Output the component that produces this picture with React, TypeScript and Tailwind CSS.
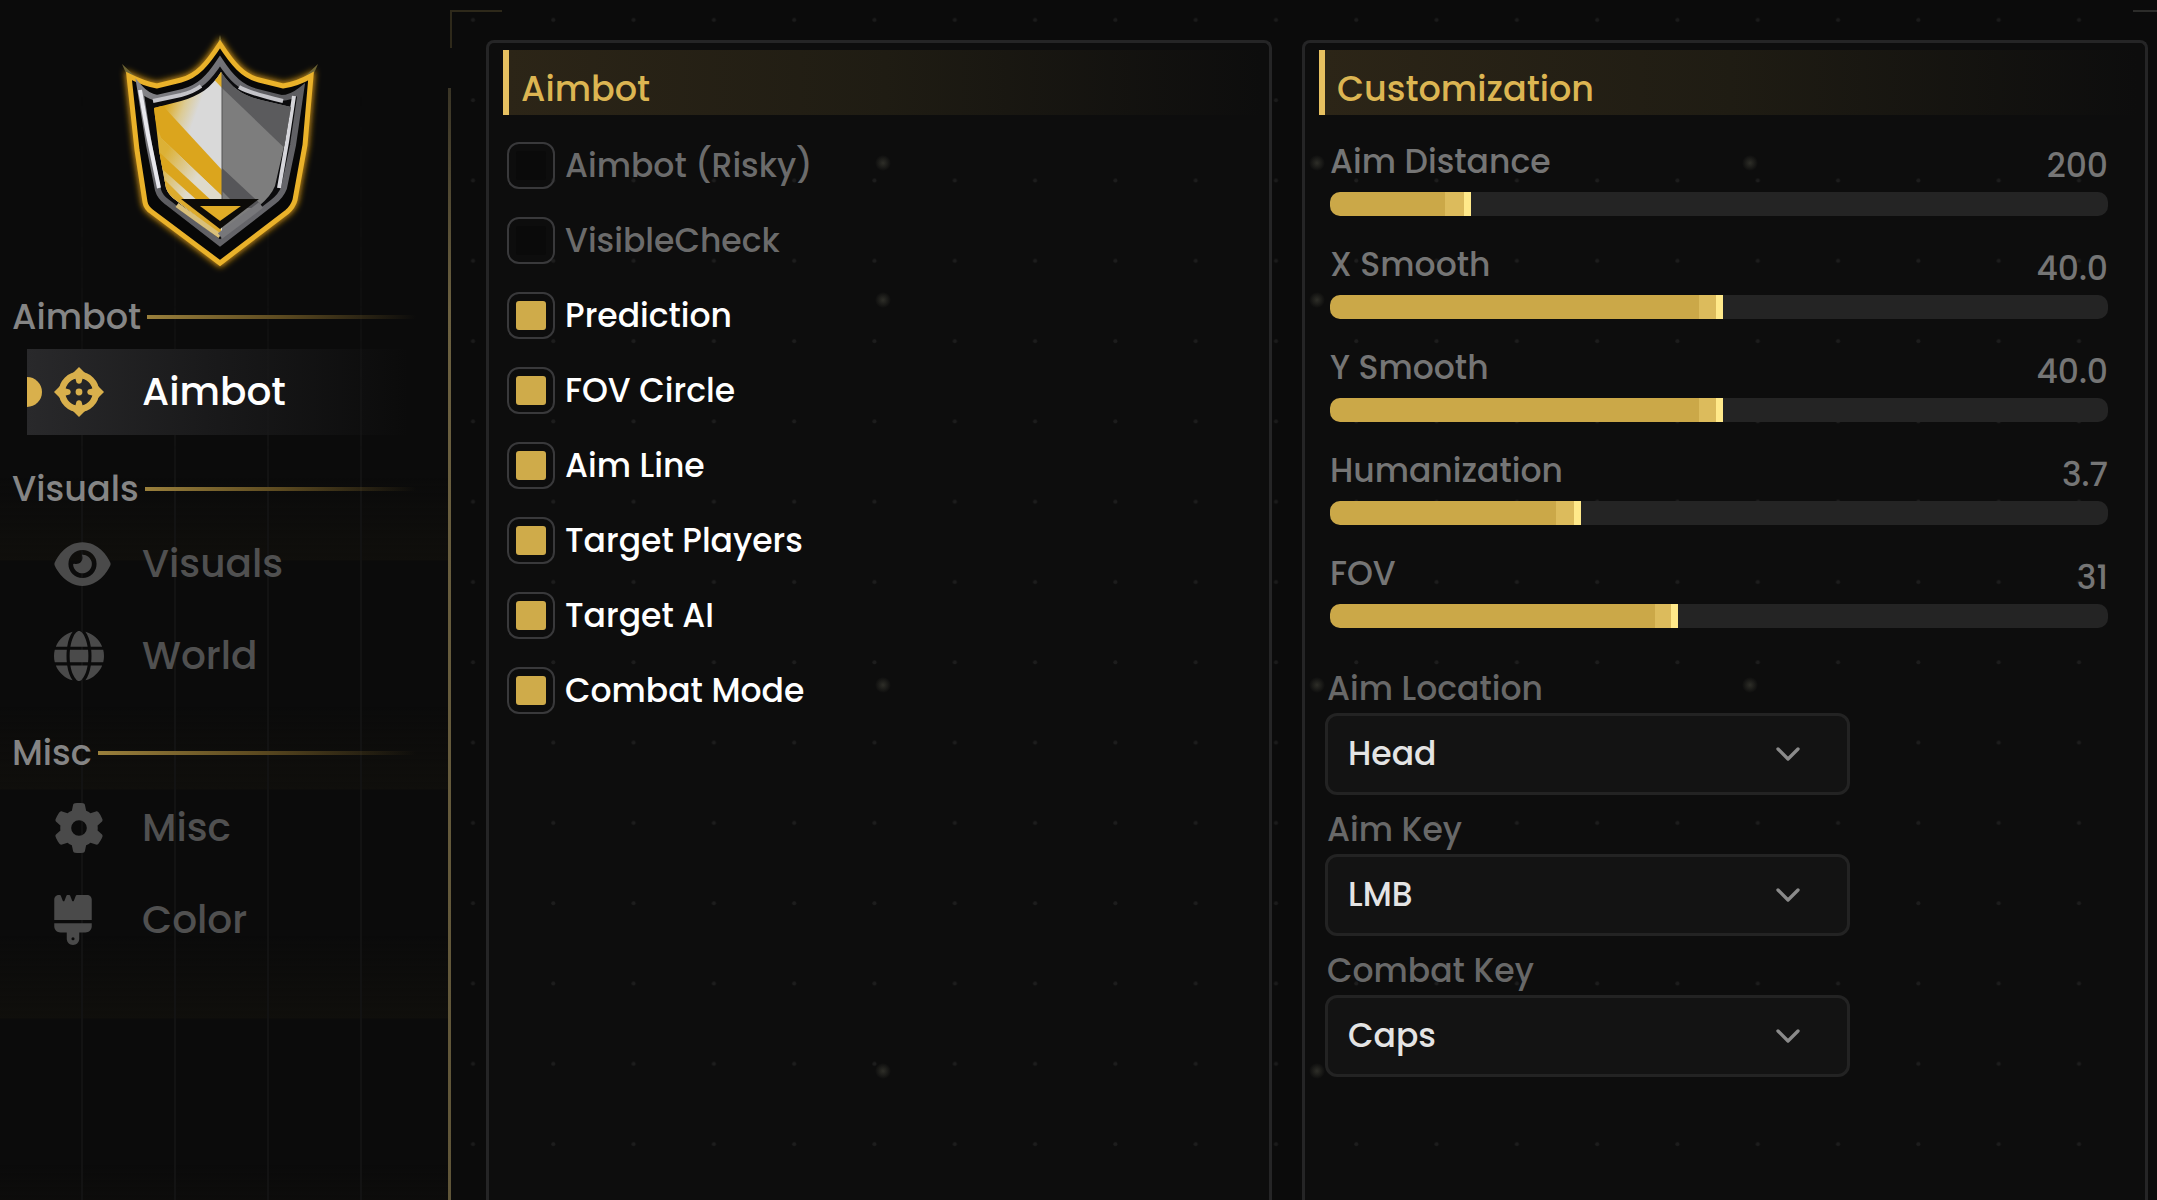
import React, { useState } from 'react';
import { ChevronDown } from 'lucide-react';
import { FaBrush, FaEye, FaGear, FaGlobe } from 'react-icons/fa6';

interface NavItem {
    label: string;
    icon: React.ReactNode;
}

interface NavSection {
    title: string;
    items: NavItem[];
}

interface SliderConfig {
    label: string;
    value: number;
    min: number;
    max: number;
    step: number;
    digits: number;
}

const CrosshairIcon: React.FC = () => (
    <svg viewBox="0 0 50 50" className="h-[50px] w-[50px]" fill="currentColor" aria-hidden="true">
        <circle cx="25" cy="25" r="17" fill="none" stroke="currentColor" strokeWidth="6.5" />
        <path d="M25 0 L33 8 H17Z M25 50 L17 42 H33Z M0 25 L8 17 V33Z M50 25 L42 33 V17Z" />
        <path d="M21 10 H29 L27.5 15.5 Q25 18 22.5 15.5Z M21 40 H29 L27.5 34.5 Q25 32 22.5 34.5Z M10 21 V29 L15.5 27.5 Q18 25 15.5 22.5Z M40 21 V29 L34.5 27.5 Q32 25 34.5 22.5Z" />
        <circle cx="25" cy="25" r="3.4" />
    </svg>
);

const NAV_SECTIONS: NavSection[] = [
    { title: 'Aimbot', items: [{ label: 'Aimbot', icon: <CrosshairIcon /> }] },
    {
        title: 'Visuals',
        items: [
            { label: 'Visuals', icon: <FaEye className="h-[50px] w-[57px]" /> },
            { label: 'World', icon: <FaGlobe className="h-[50px] w-[50px]" /> },
        ],
    },
    {
        title: 'Misc',
        items: [
            { label: 'Misc', icon: <FaGear className="h-[50px] w-[50px]" /> },
            { label: 'Color', icon: <FaBrush className="h-[50px] w-[38px]" /> },
        ],
    },
];

const TOGGLES = [
    { label: 'Aimbot (Risky)', on: false },
    { label: 'VisibleCheck', on: false },
    { label: 'Prediction', on: true },
    { label: 'FOV Circle', on: true },
    { label: 'Aim Line', on: true },
    { label: 'Target Players', on: true },
    { label: 'Target AI', on: true },
    { label: 'Combat Mode', on: true },
];

const SLIDERS: SliderConfig[] = [
    { label: 'Aim Distance', value: 200, min: 0, max: 1150, step: 1, digits: 0 },
    { label: 'X Smooth', value: 40, min: 0, max: 80, step: 0.1, digits: 1 },
    { label: 'Y Smooth', value: 40, min: 0, max: 80, step: 0.1, digits: 1 },
    { label: 'Humanization', value: 3.7, min: 0, max: 11.7, step: 0.1, digits: 1 },
    { label: 'FOV', value: 31, min: 0, max: 70, step: 1, digits: 0 },
];

const SELECTS = [
    { label: 'Aim Location', options: ['Head', 'Neck', 'Chest'] },
    { label: 'Aim Key', options: ['LMB', 'RMB', 'Shift'] },
    { label: 'Combat Key', options: ['Caps', 'Alt', 'Ctrl'] },
];

const SPARKS = [
    [883, 163], [883, 300], [883, 685], [883, 1071],
    [1317, 163], [1317, 300], [1317, 685], [1317, 1071],
    [1750, 163], [1750, 685],
];

const SHIELD_OUTLINE =
    'M105 14 C92 34 82 46 66 50 L42 56 Q30 54 14 46 L22 120 L30 172 Q31 178 37 182 L105 233 L172 182 Q178 177 180 170 L190 115 L196 46 Q182 54 168 56 L144 50 C128 46 118 34 105 14Z';

const ShieldLogo: React.FC = () => (
    <svg viewBox="0 0 210 250" className="h-[250px] w-[210px]" aria-hidden="true">
        <defs>
            <filter id="glow" x="-20%" y="-20%" width="140%" height="140%">
                <feGaussianBlur stdDeviation="3" />
            </filter>
            <linearGradient id="rim" x1="0" y1="0" x2="1" y2="1">
                <stop offset="0" stopColor="#8d8d92" />
                <stop offset="0.5" stopColor="#5a5a5e" />
                <stop offset="1" stopColor="#6d6d72" />
            </linearGradient>
            <linearGradient id="leftFace" gradientUnits="userSpaceOnUse" x1="46" y1="86" x2="84" y2="100">
                <stop offset="0" stopColor="#dca81c" />
                <stop offset="0.45" stopColor="#dccb94" />
                <stop offset="0.8" stopColor="#d9d9d9" />
            </linearGradient>
            <linearGradient id="streak" gradientUnits="userSpaceOnUse" x1="46" y1="130" x2="80" y2="150">
                <stop offset="0" stopColor="#dcb136" />
                <stop offset="1" stopColor="#dedacb" />
            </linearGradient>
            <clipPath id="face">
                <path d="M106 42 C96 58 84 66 66 71 L39 78 L44 120 L51 158 Q54 166 62 171 L106 206 L144 176 Q156 166 160 156 L170 112 L176 77 L146 70 C130 66 118 60 106 42Z" />
            </clipPath>
        </defs>
        <path d={SHIELD_OUTLINE} fill="none" stroke="#d99a12" strokeWidth="7" filter="url(#glow)" />
        <path d="M105 5 L102 16 H108Z M7 34 L14 50 L22 48Z M203 34 L196 50 L188 48Z" fill="#6d6434" />
        <path d={SHIELD_OUTLINE} fill="#070707" stroke="#eab22a" strokeWidth="5" />
        <path
            d="M105 31 C94 48 84 58 68 62 L42 68 Q32 66 25 58 L34 115 L43 160 Q45 167 52 172 L105 213 L158 172 Q166 166 169 158 L178 115 L186 60 Q176 68 166 68 L142 62 C126 58 116 48 105 31Z"
            fill="#0b0b0d"
            stroke="url(#rim)"
            strokeWidth="6"
        />
        <path d="M25 60 L33 105 L44 158" fill="none" stroke="#e8e8ee" strokeWidth="4" />
        <path d="M179 66 L172 112 L164 158" fill="none" stroke="#d5d5da" strokeWidth="4" />
        <path d="M38 71 L66 65 Q78 62 86 56 M124 57 Q134 63 168 71" fill="none" stroke="#c4c4c9" strokeWidth="4" />
        <g clipPath="url(#face)">
            <rect x="30" y="38" width="77" height="172" fill="url(#leftFace)" />
            <path d="M92 42 H107 V58Z" fill="#dfae2a" />
            <path d="M36 76 H48 L107 140 V166 L46 108Z" fill="#dba51d" />
            <path d="M44 106 L107 166 V210 H40Z" fill="url(#streak)" />
            <path d="M44 122 L98 172 H84 L46 138Z" fill="#dba51d" />
            <path d="M48 148 L72 172 L106 198 V208 L48 170Z" fill="#dcab2e" />
            <rect x="107" y="38" width="72" height="172" fill="#7d7d7d" />
            <path d="M107 40 L180 60 V128 L107 58Z" fill="#5b5b5d" />
            <path d="M107 138 L150 178 H124 L107 161Z" fill="#565659" />
            <path d="M107 42 V174" stroke="#555" strokeWidth="1" />
        </g>
        <path d="M66 169 H144 L105 199Z" fill="#0c0b08" />
        <path d="M85 176 H126 L105 191Z" fill="#e0ac26" />
        <path d="M62 175 L105 206" stroke="#d9c07a" strokeWidth="5" />
        <path d="M146 175 L105 206" stroke="#77777a" strokeWidth="7" />
    </svg>
);

const Sidebar: React.FC = () => {
    const [active, setActive] = useState('Aimbot');

    return (
        <aside className="relative w-[448px] shrink-0">
            <div className="absolute inset-0 bg-[repeating-linear-gradient(to_bottom,transparent_0px,transparent_20px,#100f0c_102px,transparent_103px,transparent_229px)] [mask-image:linear-gradient(to_bottom,transparent_30%,black_40%)]" />
            <div className="absolute inset-0 bg-[repeating-linear-gradient(to_right,transparent_0px,transparent_81px,#131313_81px,#131313_83px,transparent_83px,transparent_93px)] [mask-image:linear-gradient(to_bottom,transparent_8%,black_40%)]" />
            <div className="relative flex flex-col pt-[30px]">
                <div className="flex pl-[115px]">
                    <ShieldLogo />
                </div>
                <nav className="mt-[21px] flex flex-col gap-[38px]">
                    {NAV_SECTIONS.map((section) => (
                        <section key={section.title}>
                            <div className="flex items-center gap-1.5 pr-8 pl-3">
                                <h2 className="text-[35px] leading-8 font-medium text-[#858585]">{section.title}</h2>
                                <span className="h-1 flex-1 bg-linear-to-r from-[#9a803c] via-[#5c4a20] to-transparent" />
                            </div>
                            <div className="mt-4 flex flex-col gap-1.5">
                                {section.items.map(({ label, icon }) => {
                                    const isActive = active === label;
                                    return (
                                        <button
                                            key={label}
                                            type="button"
                                            onClick={() => setActive(label)}
                                            className={`relative ml-[27px] flex h-[86px] items-center pl-[27px] text-left text-[39px] font-medium ${
                                                isActive
                                                    ? 'mr-10 bg-linear-to-r from-[#29292b] via-[#19191a] to-transparent text-white'
                                                    : 'text-[#505050]'
                                            }`}
                                        >
                                            {isActive && <span className="absolute left-0 h-[30px] w-[15px] rounded-r-full bg-[#d9b04c]" />}
                                            <span className={`flex w-[88px] ${isActive ? 'text-[#d9b04c]' : 'text-[#4a4a4a]'}`}>
                                                {icon}
                                            </span>
                                            {label}
                                        </button>
                                    );
                                })}
                            </div>
                        </section>
                    ))}
                </nav>
            </div>
        </aside>
    );
};

const Panel: React.FC<{ title: string; children: React.ReactNode }> = ({ title, children }) => (
    <section className="rounded-t-lg border-3 border-b-0 border-[#252526] bg-white/1 pt-[7px] pr-2">
        <h2 className="ml-[14px] border-l-6 border-[#e6c060] bg-linear-to-r from-[#2c2517] via-[#1f1c13] to-[#0d0d0d] pt-3 pl-3 text-[35px] leading-[53px] font-medium text-[#dcb552]">
            {title}
        </h2>
        {children}
    </section>
);

const Toggle: React.FC<{ label: string; defaultOn: boolean }> = ({ label, defaultOn }) => (
    <label className="flex cursor-pointer items-center gap-[10px]">
        <input
            type="checkbox"
            defaultChecked={defaultOn}
            className="peer h-[47px] w-12 appearance-none rounded-xl border-2 border-[#39393b] bg-[#0a0a0a] bg-clip-content p-[7px] checked:bg-[#cfab4a]"
        />
        <span className="text-[33px] leading-[47px] font-medium text-[#6b6b6b] peer-checked:text-white">{label}</span>
    </label>
);

const Slider: React.FC<{ config: SliderConfig }> = ({ config }) => {
    const [value, setValue] = useState(config.value);
    const percent = ((value - config.min) / (config.max - config.min)) * 100;

    return (
        <label className="flex flex-col">
            <span className="flex justify-between text-[33px] leading-10 font-medium text-[#757575]">
                {config.label}
                <span className="pt-1">{value.toFixed(config.digits)}</span>
            </span>
            <input
                type="range"
                min={config.min}
                max={config.max}
                step={config.step}
                value={value}
                onChange={(e) => setValue(Number(e.target.value))}
                className="mt-1.5 h-6 w-full cursor-pointer appearance-none overflow-hidden rounded-[10px] [&::-webkit-slider-thumb]:h-6 [&::-webkit-slider-thumb]:w-[7px] [&::-webkit-slider-thumb]:appearance-none [&::-webkit-slider-thumb]:bg-[#ffe98a]"
                style={{
                    background: `linear-gradient(to right, #cba848 calc(${percent}% - 20px), #dcbb5c calc(${percent}% - 20px), #dcbb5c ${percent}%, #242424 ${percent}%)`,
                }}
            />
        </label>
    );
};

const SelectField: React.FC<{ label: string; options: string[] }> = ({ label, options }) => (
    <label className="flex flex-col text-[33px] leading-10 font-medium text-[#686868]">
        <span className="pl-0.5">{label}</span>
        <span className="relative mt-1 flex items-center">
            <select className="h-[82px] w-full appearance-none rounded-xl border-3 border-[#232323] bg-[#131313] px-5 text-[33px] text-[#e4e4e4]">
                {options.map((option) => (
                    <option key={option}>{option}</option>
                ))}
            </select>
            <ChevronDown className="pointer-events-none absolute right-[42px] size-10 text-[#8a8a8a]" strokeWidth={2} />
        </span>
    </label>
);

// Dotted grid with soft sparks behind the panels
const GridBackdrop: React.FC = () => (
    <svg className="pointer-events-none absolute inset-0 h-full w-full" aria-hidden="true">
        <defs>
            <pattern id="dots" width="80.3" height="80.3" patternUnits="userSpaceOnUse" x="433" y="-20">
                <circle cx="40" cy="40" r="2" fill="#1b1b1b" />
            </pattern>
            <radialGradient id="spark">
                <stop offset="0" stopColor="#2c2c26" />
                <stop offset="1" stopColor="#2c2c26" stopOpacity="0" />
            </radialGradient>
        </defs>
        <rect x="455" width="100%" height="100%" fill="url(#dots)" />
        {SPARKS.map(([x, y]) => (
            <circle key={`${x}-${y}`} cx={x} cy={y} r="8" fill="url(#spark)" />
        ))}
    </svg>
);

const App: React.FC = () => (
    <div className="relative flex min-h-screen overflow-hidden bg-[#0b0b0b] font-['Poppins',Inter,sans-serif]">
        <GridBackdrop />
        <Sidebar />
        <div className="mt-[88px] w-[3px] shrink-0 bg-linear-to-b from-[#3a3526] via-[#6b6040] via-20% to-[#5f5538]" />
        <span className="absolute top-[10px] left-[450px] h-[38px] w-[52px] border-t-2 border-l-2 border-[#2e291a]" />
        <span className="absolute top-[10px] right-0 h-[2px] w-6 bg-[#2c2c2a]" />
        <main className="relative grid flex-1 grid-cols-[786fr_846fr] gap-[30px] pt-10 pr-[9px] pl-[35px]">
            <Panel title="Aimbot">
                <div className="mt-[27px] ml-[18px] flex flex-col gap-7">
                    {TOGGLES.map((toggle) => (
                        <Toggle key={toggle.label} label={toggle.label} defaultOn={toggle.on} />
                    ))}
                </div>
            </Panel>
            <Panel title="Customization">
                <div className="mt-[27px] mr-[29px] ml-[25px] flex flex-col gap-[29px]">
                    {SLIDERS.map((slider) => (
                        <Slider key={slider.label} config={slider} />
                    ))}
                </div>
                <div className="mt-[41px] ml-5 flex w-[525px] max-w-full flex-col gap-[15px]">
                    {SELECTS.map((field) => (
                        <SelectField key={field.label} label={field.label} options={field.options} />
                    ))}
                </div>
            </Panel>
        </main>
    </div>
);

export default App;
